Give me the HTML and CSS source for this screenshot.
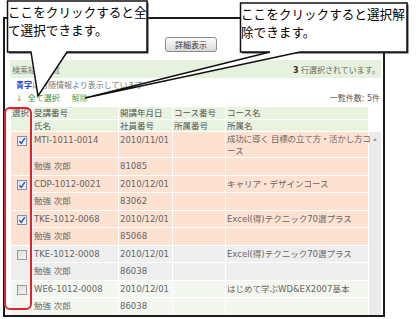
FILE: index.html
```html
<!DOCTYPE html>
<html lang="ja">
<head>
<meta charset="utf-8">
<title>検索結果一覧</title>
<link rel="stylesheet" href="styles.css">
</head>
<body>
<div class="stage">
  <div class="frame">
    <div class="toolbar"><button class="btn">詳細表示</button></div>
    <div class="content">
      <div class="resultbar">
        <span class="title">検索結果一覧</span>
        <span class="count"><b>3</b> 行選択されています。</span>
      </div>
      <div class="note"><span class="blue">青字</span>は付随情報より表示しています</div>
      <div class="actions">
        <div class="links"><span class="arrow">↓</span><a class="all">全て選択</a><a class="clear">解除</a></div>
        <div class="total">一覧件数: 5件</div>
      </div>
      <table class="grid">
        <colgroup>
          <col class="c-sel"><col class="c-id"><col class="c-date"><col class="c-cno"><col class="c-cname"><col class="c-scroll">
        </colgroup>
        <thead>
          <tr><th rowspan="2">選択</th><th>受講番号</th><th>開講年月日</th><th>コース番号</th><th>コース名</th><th rowspan="2" class="blank"></th></tr>
          <tr><th>氏名</th><th>社員番号</th><th>所属番号</th><th>所属名</th></tr>
        </thead>
        <tbody>
          <tr class="peach">
            <td rowspan="2" class="sel"><span class="cb on"><svg viewBox="0 0 8 8" width="8" height="8"><path d="M1.3 4.2 L3.3 6.3 L6.8 1.2" fill="none" stroke="#2350c4" stroke-width="1.4"/></svg></span></td>
            <td>MTI-1011-0014</td><td>2010/11/01</td><td></td><td class="wrap"><span class="nw">成功に導く 目標の立て方・活かし方コ</span><wbr>ース</td>
            <td rowspan="10" class="scroll"><span class="up"></span></td>
          </tr>
          <tr class="peach"><td>勉強 次郎</td><td>81085</td><td></td><td></td></tr>
          <tr class="peach">
            <td rowspan="2" class="sel"><span class="cb on"><svg viewBox="0 0 8 8" width="8" height="8"><path d="M1.3 4.2 L3.3 6.3 L6.8 1.2" fill="none" stroke="#2350c4" stroke-width="1.4"/></svg></span></td>
            <td>CDP-1012-0021</td><td>2010/12/01</td><td></td><td>キャリア・デザインコース</td>
          </tr>
          <tr class="peach"><td>勉強 次郎</td><td>83062</td><td></td><td></td></tr>
          <tr class="peach">
            <td rowspan="2" class="sel"><span class="cb on"><svg viewBox="0 0 8 8" width="8" height="8"><path d="M1.3 4.2 L3.3 6.3 L6.8 1.2" fill="none" stroke="#2350c4" stroke-width="1.4"/></svg></span></td>
            <td>TKE-1012-0068</td><td>2010/12/01</td><td></td><td>Excel(得)テクニック70選プラス</td>
          </tr>
          <tr class="peach"><td>勉強 次郎</td><td>85068</td><td></td><td></td></tr>
          <tr class="gray">
            <td rowspan="2" class="sel"><span class="cb"></span></td>
            <td>TKE-1012-0008</td><td>2010/12/01</td><td></td><td>Excel(得)テクニック70選プラス</td>
          </tr>
          <tr class="gray"><td>勉強 次郎</td><td>86038</td><td></td><td></td></tr>
          <tr class="light">
            <td rowspan="2" class="sel"><span class="cb"></span></td>
            <td>WE6-1012-0008</td><td>2010/12/01</td><td></td><td>はじめて学ぶWD&amp;EX2007基本</td>
          </tr>
          <tr class="light"><td>勉強 次郎</td><td>86038</td><td></td><td></td></tr>
        </tbody>
      </table>
    </div>
  </div>

  <div class="highlight"></div>

  <svg class="callouts" width="416" height="319" viewBox="0 0 416 319">
    <rect x="9" y="2.5" width="139.5" height="51" fill="#3a3a3a"/>
    <path d="M7.5 1 H147 V52 H67 L38 96 L31 52 H7.5 Z" fill="#fff" stroke="#111" stroke-width="1.5" stroke-linejoin="miter"/>
    <rect x="242" y="4.5" width="166.5" height="49" fill="#3a3a3a"/>
    <path d="M240.5 3 H407 V52 H300 L85 98 L270 52 H240.5 Z" fill="#fff" stroke="#111" stroke-width="1.5" stroke-linejoin="miter"/>
  </svg>

  <div class="callout-text left">ここをクリックすると全<br>て選択できます。</div>
  <div class="callout-text right">ここをクリックすると選択解<br>除できます。</div>
</div>
</body>
</html>
```

FILE: styles.css
```css
html, body {
  margin: 0;
  padding: 0;
  background: #fff;
}
body {
  font-family: "DejaVu Sans", "Noto Sans CJK JP", sans-serif;
  color: #555;
}
.stage {
  position: relative;
  width: 416px;
  height: 319px;
  overflow: hidden;
  background: #fff;
}
.frame {
  margin: 17px 0 0 3px;
  width: 378px;
  height: 296px;
  border: 2px solid #1c1c1c;
  overflow: hidden;
  background: #fff;
}
.toolbar {
  display: flex;
  justify-content: center;
  padding: 18px 6px 0 0;
  height: 15px;
}
.btn {
  width: 52px;
  height: 15px;
  padding: 0;
  border: 1px solid #8c8c8c;
  border-radius: 3px;
  background: linear-gradient(#fdfdfd, #d9d9d9);
  font-family: "Noto Sans CJK JP", sans-serif;
  font-size: 8px;
  line-height: 13px;
  color: #333;
}
.content {
  padding: 8px 2px 0 5px;
}
.resultbar {
  display: flex;
  justify-content: space-between;
  align-items: center;
  height: 18px;
  padding: 0 1px 0 2px;
  background: #e6f2de;
  font-size: 8px;
  color: #777;
}
.resultbar .count {
  color: #666;
}
.resultbar .count b {
  color: #333;
  font-weight: bold;
}
.note {
  margin-top: 2px;
  height: 12px;
  line-height: 12px;
  padding-left: 6px;
  font-size: 8px;
  color: #777;
}
.note .blue {
  color: #1b3ec9;
  font-weight: bold;
}
.actions {
  display: flex;
  justify-content: space-between;
  height: 13px;
  line-height: 13px;
  padding-left: 6px;
  font-size: 8px;
}
.links {
  display: flex;
}
.arrow {
  color: #c08a2a;
  margin-right: 5px;
}
.links .all {
  color: #3c8c30;
}
.links .clear {
  color: #5aa84a;
  margin-left: 12px;
}
.total {
  color: #555;
  padding-right: 1px;
}
.grid {
  margin-top: 1px;
  width: 371px;
  table-layout: fixed;
  border-collapse: collapse;
  font-size: 8.5px;
  color: #666;
}
.c-sel { width: 22px; }
.c-id { width: 86px; }
.c-date { width: 54px; }
.c-cno { width: 53px; }
.c-cname { width: 143px; }
.c-scroll { width: 13px; }
.grid th {
  border: 1px solid #fff;
  background: #e8f4e0;
  font-weight: normal;
  text-align: left;
  vertical-align: top;
  color: #555;
  padding: 1px 1px 0 1px;
  line-height: 10.5px;
  white-space: nowrap;
}
.grid th.blank {
  background: #fff;
}
.grid td {
  border: 1px solid #fff;
  padding: 3px 1px 2px 1px;
  line-height: 11.5px;
  vertical-align: top;
  white-space: nowrap;
}
.grid td.wrap {
  white-space: normal;
  letter-spacing: -0.2px;
  padding: 2px 0 0 1px;
  line-height: 11.5px;
}
.grid td.wrap .nw {
  white-space: nowrap;
}
.grid tr.peach td { background: #fde1d1; }
.grid tr.gray td { background: #eeeeee; }
.grid tr.light td { background: #f4f7f0; }
.grid td.sel {
  text-align: center;
  padding: 4px 0 0 0;
}
.grid td.scroll {
  background: #ebebeb !important;
  text-align: center;
  padding: 6px 0 0 0;
}
.up {
  display: inline-block;
  width: 0;
  height: 0;
  border-left: 2.5px solid transparent;
  border-right: 2.5px solid transparent;
  border-bottom: 3px solid #9a9a9a;
  vertical-align: top;
}
.cb {
  display: inline-block;
  box-sizing: border-box;
  width: 10px;
  height: 10px;
  border: 1px solid #9a9a9a;
  background: linear-gradient(135deg, #dcdcdc, #f6f6f6);
  vertical-align: top;
  position: relative;
}
.cb.on {
  border-color: #7f93ae;
  background: linear-gradient(135deg, #dde5f0, #f7f9fc);
}
.cb svg {
  display: block;
}
.highlight {
  position: absolute;
  left: 4px;
  top: 107px;
  width: 28px;
  height: 203px;
  box-sizing: border-box;
  border: 2px solid #e3232c;
  border-radius: 6px;
}
.callouts {
  position: absolute;
  left: 0;
  top: 0;
}
.callout-text {
  position: absolute;
  font-family: "Noto Sans CJK JP", sans-serif;
  font-size: 12.6px;
  line-height: 18px;
  color: #000;
  white-space: nowrap;
}
.callout-text.left {
  left: 8px;
  top: 3px;
}
.callout-text.right {
  left: 241px;
  top: 5px;
}
```
